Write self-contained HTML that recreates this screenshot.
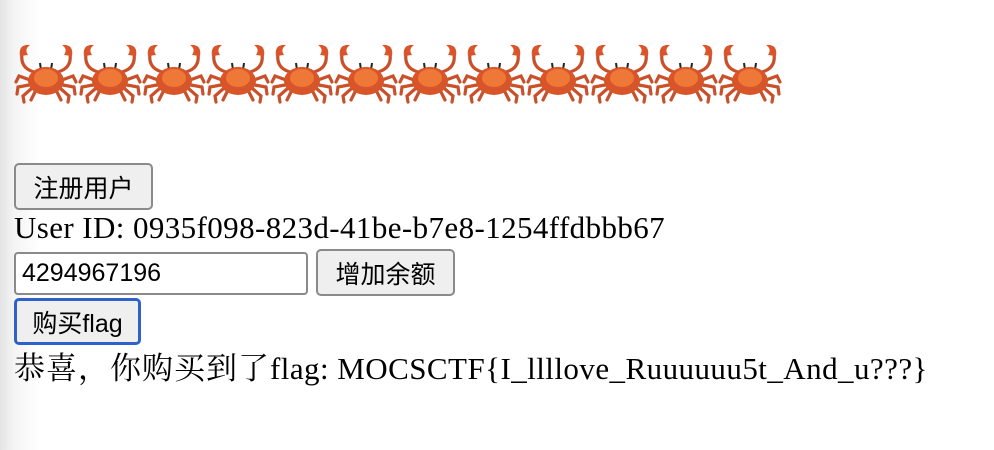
<!DOCTYPE html>
<html><head><meta charset="utf-8"><style>
html,body{margin:0;padding:0;width:994px;height:450px;overflow:hidden;background:#fff;}
body{background:linear-gradient(to right,#e4e4e4 0px,#f4f4f4 14px,#fff 40px);position:relative;font-family:"Liberation Serif","Noto Serif CJK SC",serif;color:#000}
.a{position:absolute}
.btn{position:absolute;box-sizing:border-box;border:2px solid #8a8a8a;border-radius:5px;background:#efefef;font-family:"Liberation Sans","Noto Sans CJK SC",sans-serif;font-size:25px;display:flex;align-items:center;justify-content:center;color:#000}
.t{font-size:31px;white-space:nowrap;line-height:36px}
</style></head><body>
<svg width="0" height="0" style="position:absolute"><defs>
<symbol id="c" viewBox="0 0 64 64">
<g stroke="#c9502a" stroke-width="3.2" fill="none" stroke-linecap="round">
<path d="M16 38 L5 34 L2 40"/><path d="M15 43 L4 45 L3 52"/><path d="M17 47 L9 54 L10 60"/><path d="M21 50 L17 58"/>
<path d="M48 38 L59 34 L62 40"/><path d="M49 43 L60 45 L61 52"/><path d="M47 47 L55 54 L54 60"/><path d="M43 50 L47 58"/>
<path d="M20 30 Q6 26 8 12"/><path d="M44 30 Q58 26 56 12"/>
</g>
<path d="M6 14 Q4 2 16 3 Q10 7 14 13 Z" fill="#d9562b"/>
<path d="M58 14 Q60 2 48 3 Q54 7 50 13 Z" fill="#d9562b"/>
<line x1="27" y1="28" x2="26" y2="21" stroke="#222" stroke-width="2"/>
<line x1="37" y1="28" x2="38" y2="21" stroke="#222" stroke-width="2"/>
<ellipse cx="32" cy="39" rx="18" ry="14" fill="#d8552a"/>
<ellipse cx="32" cy="36" rx="12" ry="9" fill="#ee7837"/>
</symbol></defs></svg>
<div class="a" style="left:14px;top:42px;height:64px;display:flex">
<svg width="64" height="64"><use href="#c"/></svg><svg width="64" height="64"><use href="#c"/></svg><svg width="64" height="64"><use href="#c"/></svg><svg width="64" height="64"><use href="#c"/></svg><svg width="64" height="64"><use href="#c"/></svg><svg width="64" height="64"><use href="#c"/></svg><svg width="64" height="64"><use href="#c"/></svg><svg width="64" height="64"><use href="#c"/></svg><svg width="64" height="64"><use href="#c"/></svg><svg width="64" height="64"><use href="#c"/></svg><svg width="64" height="64"><use href="#c"/></svg><svg width="64" height="64"><use href="#c"/></svg>
</div>
<div class="btn" style="left:14px;top:163px;width:139px;height:47px">注册用户</div>
<div class="a t" style="left:14px;top:210px;letter-spacing:0.4px">User ID: 0935f098-823d-41be-b7e8-1254ffdbbb67</div>
<div class="a" style="left:14px;top:252px;width:294px;height:43px;box-sizing:border-box;border:2px solid #8a8a8a;border-radius:4px;background:#fff;font-family:'Liberation Sans',sans-serif;font-size:25px;line-height:39px;padding-left:6px">4294967196</div>
<div class="btn" style="left:316px;top:249px;width:139px;height:47px">增加余额</div>
<div class="btn" style="left:14px;top:298px;width:127px;height:47px;border:3px solid #2f62c9">购买flag</div>
<div class="a t" style="left:14px;top:351px"><span style="letter-spacing:1px">恭喜，你购买到了</span><span style="letter-spacing:0.45px">flag: MOCSCTF{I_llllove_Ruuuuuu5t_And_u???}</span></div>
</body></html>
